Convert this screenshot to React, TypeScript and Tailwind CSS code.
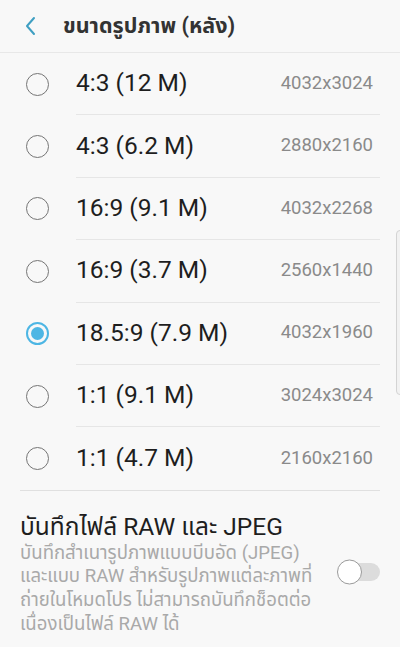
import { useState } from "react";

const sizes = [
  { label: "4:3 (12 M)", res: "4032x3024" },
  { label: "4:3 (6.2 M)", res: "2880x2160" },
  { label: "16:9 (9.1 M)", res: "4032x2268" },
  { label: "16:9 (3.7 M)", res: "2560x1440" },
  { label: "18.5:9 (7.9 M)", res: "4032x1960" },
  { label: "1:1 (9.1 M)", res: "3024x3024" },
  { label: "1:1 (4.7 M)", res: "2160x2160" },
];

const font = { fontFamily: '"Roboto", "Noto Sans", "Noto Sans Thai", sans-serif' };

function Radio({ checked }: { checked: boolean }) {
  if (checked) {
    return (
      <div className="w-[23px] h-[23px] rounded-full border-2 border-[#4db6e4] flex items-center justify-center">
        <div className="w-[13px] h-[13px] rounded-full bg-[#4db6e4]" />
      </div>
    );
  }
  return <div className="w-[23px] h-[23px] rounded-full border-[1.5px] border-[#757575]" />;
}

export default function App() {
  const [selected, setSelected] = useState(4);
  const [raw, setRaw] = useState(false);

  return (
    <div className="relative w-[400px] h-[647px] overflow-hidden bg-[#f8f8f8]" style={font}>
      {/* Header */}
      <div className="h-[53px] flex items-center border-b border-[#e8e8e8]">
        <svg className="ml-[24px]" width="12" height="20" viewBox="0 0 12 20" fill="none">
          <path d="M10 2 L3 10 L10 18" stroke="#3f9fc2" strokeWidth="2" strokeLinecap="round" strokeLinejoin="round" />
        </svg>
        <h1 className="ml-[27px] text-[21.5px] font-bold text-[#333333]">ขนาดรูปภาพ (หลัง)</h1>
      </div>

      {/* Size options */}
      <div className="pr-[20px]">
        {sizes.map((s, i) => (
          <button
            key={s.label}
            onClick={() => setSelected(i)}
            className="w-full h-[62.4px] flex items-center text-left"
          >
            <div className="w-[76px] flex justify-center pl-[1px] pr-[2px] shrink-0">
              <Radio checked={selected === i} />
            </div>
            <div
              className={`flex-1 h-full flex items-center justify-between pr-[7px] ${
                i < sizes.length - 1 ? "border-b border-[#e6e6e6]" : ""
              }`}
            >
              <span className="text-[24.5px] text-[#1e1e1e]">{s.label}</span>
              <span className="text-[18.5px] text-[#8a8a8a]">{s.res}</span>
            </div>
          </button>
        ))}
      </div>

      <div className="mx-[20px] border-t border-[#e0e0e0]" />

      {/* RAW + JPEG */}
      <div className="flex items-center px-[20px] pt-[21px]">
        <div className="flex-1">
          <div className="text-[24.5px] text-[#1e1e1e] leading-[30px]">บันทึกไฟล์ RAW และ JPEG</div>
          <div className="text-[18.6px] text-[#a9a9a9] leading-[23.7px] whitespace-nowrap">
            บันทึกสำเนารูปภาพแบบบีบอัด (JPEG)
            <br />
            และแบบ RAW สำหรับรูปภาพแต่ละภาพที่
            <br />
            ถ่ายในโหมดโปร ไม่สามารถบันทึกช็อตต่อ
            <br />
            เนื่องเป็นไฟล์ RAW ได้
          </div>
        </div>
        <button
          onClick={() => setRaw(!raw)}
          className={`relative w-[42px] h-[18px] rounded-full shrink-0 -mt-[4px] ${raw ? "bg-[#9fd6ef]" : "bg-[#dcdcdc]"}`}
        >
          <span
            className={`absolute top-1/2 -translate-y-1/2 w-[25px] h-[25px] rounded-full border-[1.5px] border-[#9a9a9a] ${
              raw ? "left-[18px] bg-[#4db6e4] border-[#4db6e4]" : "-left-[1px] bg-white"
            }`}
          />
        </button>
      </div>

      {/* Scrollbar */}
      <div className="absolute right-[-4px] top-[230px] w-[8px] h-[165px] rounded-[4px] border border-[#d4d4d4] bg-[#f2f2f2]" />
    </div>
  );
}
